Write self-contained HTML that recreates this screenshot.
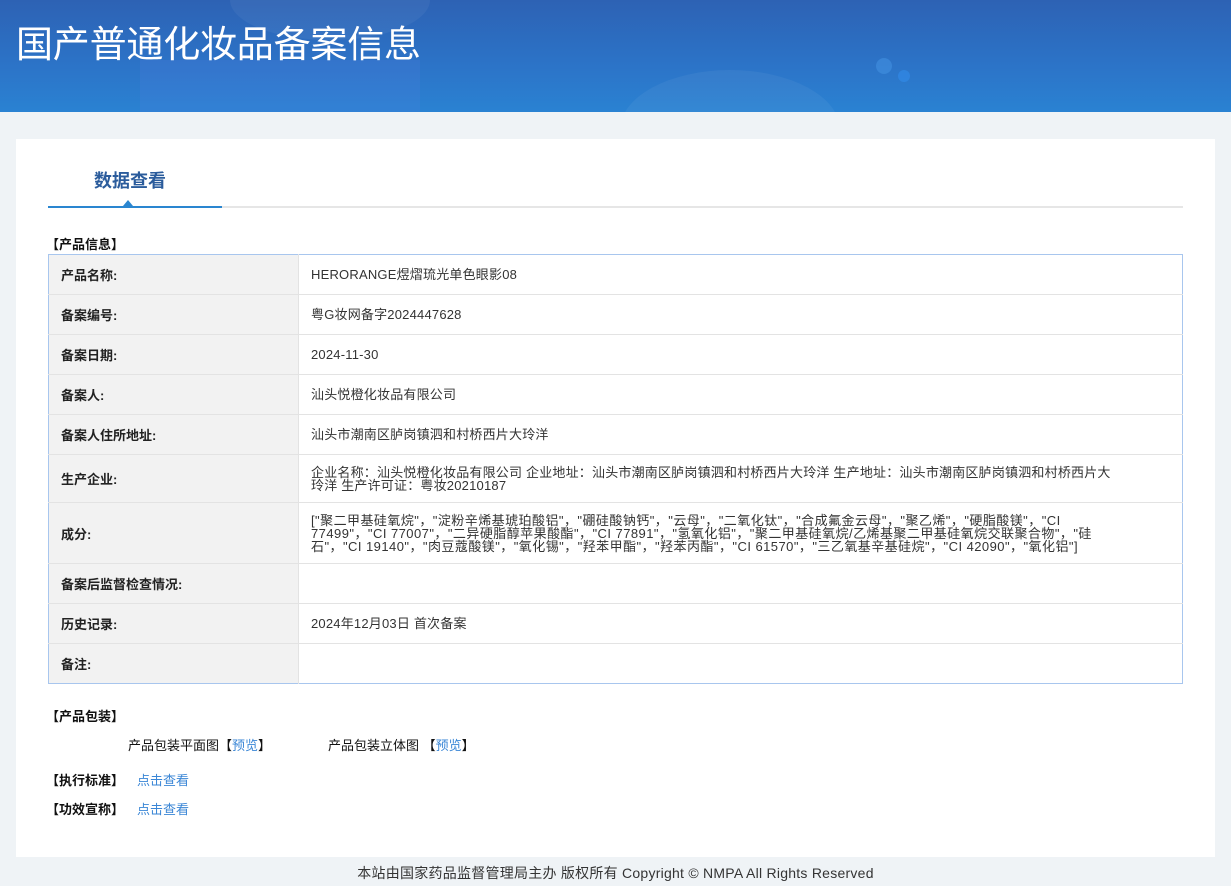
<!DOCTYPE html>
<html><head><meta charset="utf-8"><style>
*{margin:0;padding:0;box-sizing:border-box}
body{width:1231px;height:886px;background:#eff3f6;font-family:"Liberation Sans","Noto Sans CJK SC",sans-serif;color:#333;position:relative;overflow:hidden}
.hdr{position:absolute;left:0;top:0;width:1231px;height:112px;background:linear-gradient(180deg,#2d62b4 0%,#2c74c8 60%,#2a82d2 100%);overflow:hidden}
.hdr h1{position:absolute;left:16px;top:14px;font-size:37px;font-weight:normal;color:#fff;letter-spacing:-0.2px}
.blob{position:absolute;border-radius:50%;background:rgba(255,255,255,0.05)}
.card{position:absolute;left:16px;top:139px;width:1199px;height:718px;background:#fff}
.tab{position:absolute;left:78px;top:28px;font-size:18px;font-weight:bold;color:#2b5c9c}
.line{position:absolute;left:32px;top:67px;width:1135px;height:2px;background:#e6e6e6}
.line b{position:absolute;left:0;top:0;width:174px;height:2px;background:#2a86d0}
.tri{position:absolute;left:107px;top:61px;width:0;height:0;border-left:5px solid transparent;border-right:5px solid transparent;border-bottom:6px solid #2a86d0}
.sec{position:absolute;font-size:13px;font-weight:bold;color:#111}
table{position:absolute;left:32px;top:115px;width:1135px;border-collapse:collapse;border:1px solid #a8c6ee;font-size:13px}
td{border-top:1px solid #e3e3e3;padding:0 12px;vertical-align:middle}
td.l{width:250px;background:#f2f2f2;font-weight:bold;color:#222;border-right:1px solid #e3e3e3}
td.v{color:#333;line-height:13px;letter-spacing:0.2px}
.t{position:absolute;font-size:13px;color:#111}
.a,.t.a{color:#3a86d6}
.ft{position:absolute;left:0;top:863px;width:1231px;text-align:center;font-size:14px;color:#333;letter-spacing:0.25px}
</style></head><body>
<div class="hdr">
<div class="blob" style="left:140px;top:60px;width:280px;height:120px;border-radius:0;background:rgba(90,130,230,0.18)"></div>
<div class="blob" style="left:230px;top:-40px;width:200px;height:80px"></div>
<div class="blob" style="left:620px;top:70px;width:220px;height:120px"></div>
<div class="blob" style="left:876px;top:58px;width:16px;height:16px;background:rgba(70,150,230,0.5)"></div>
<div class="blob" style="left:898px;top:70px;width:12px;height:12px;background:rgba(50,140,235,0.6)"></div>
<h1>国产普通化妆品备案信息</h1>
</div>
<div class="card">
<div class="tab">数据查看</div>
<div class="line"><b></b></div>
<div class="tri"></div>
<div class="sec" style="left:30px;top:95px">【产品信息】</div>
<table>
<tr style="height:40px"><td class="l" style="border-top:0">产品名称:</td><td class="v" style="border-top:0">HERORANGE煜熠琉光单色眼影08</td></tr>
<tr style="height:40px"><td class="l">备案编号:</td><td class="v">粤G妆网备字2024447628</td></tr>
<tr style="height:40px"><td class="l">备案日期:</td><td class="v">2024-11-30</td></tr>
<tr style="height:40px"><td class="l">备案人:</td><td class="v">汕头悦橙化妆品有限公司</td></tr>
<tr style="height:40px"><td class="l">备案人住所地址:</td><td class="v">汕头市潮南区胪岗镇泗和村桥西片大玲洋</td></tr>
<tr style="height:48px"><td class="l">生产企业:</td><td class="v" style="white-space:nowrap">企业名称：汕头悦橙化妆品有限公司 企业地址：汕头市潮南区胪岗镇泗和村桥西片大玲洋 生产地址：汕头市潮南区胪岗镇泗和村桥西片大<br>玲洋 生产许可证：粤妆20210187</td></tr>
<tr style="height:61px"><td class="l">成分:</td><td class="v" style="white-space:nowrap;letter-spacing:0.45px">["聚二甲基硅氧烷"，"淀粉辛烯基琥珀酸铝"，"硼硅酸钠钙"，"云母"，"二氧化钛"，"合成氟金云母"，"聚乙烯"，"硬脂酸镁"，"CI<br>77499"，"CI 77007"，"二异硬脂醇苹果酸酯"，"CI 77891"，"氢氧化铝"，"聚二甲基硅氧烷/乙烯基聚二甲基硅氧烷交联聚合物"，"硅<br>石"，"CI 19140"，"肉豆蔻酸镁"，"氧化锡"，"羟苯甲酯"，"羟苯丙酯"，"CI 61570"，"三乙氧基辛基硅烷"，"CI 42090"，"氧化铝"]</td></tr>
<tr style="height:40px"><td class="l">备案后监督检查情况:</td><td class="v"></td></tr>
<tr style="height:40px"><td class="l">历史记录:</td><td class="v">2024年12月03日 首次备案</td></tr>
<tr style="height:40px"><td class="l">备注:</td><td class="v"></td></tr>
</table>
<div class="sec" style="left:30px;top:567px">【产品包装】</div>
<div class="t" style="left:112px;top:596px">产品包装平面图【<span class="a">预览</span>】</div>
<div class="t" style="left:312px;top:596px">产品包装立体图 【<span class="a">预览</span>】</div>
<div class="sec" style="left:30px;top:631px">【执行标准】</div><div class="t a" style="left:121px;top:631px">点击查看</div>
<div class="sec" style="left:30px;top:660px">【功效宣称】</div><div class="t a" style="left:121px;top:660px">点击查看</div>
</div>
<div class="ft">本站由国家药品监督管理局主办 版权所有 Copyright © NMPA All Rights Reserved</div>
</body></html>
